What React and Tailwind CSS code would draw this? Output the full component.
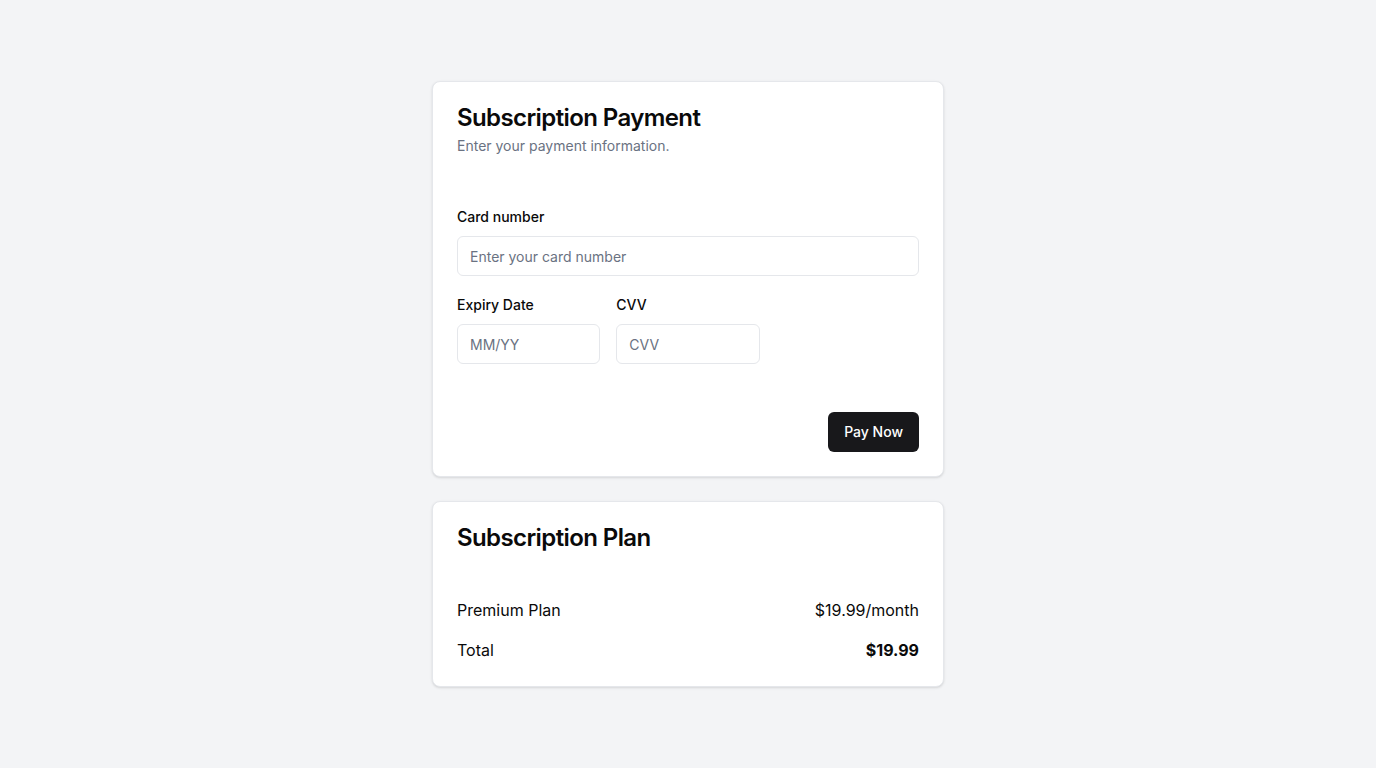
export default function App() {
  return (
    <div className="min-h-screen bg-gray-100 flex items-center justify-center font-['Inter',sans-serif] text-[#0a0a0a]">
      <div className="w-full max-w-lg space-y-6">
        {/* Payment card */}
        <div className="bg-white border border-gray-200 rounded-lg shadow-sm">
          <div className="p-6 flex flex-col space-y-1.5">
            <h2 className="text-2xl font-semibold leading-none tracking-tight">Subscription Payment</h2>
            <p className="text-sm text-gray-500">Enter your payment information.</p>
          </div>
          <div className="px-6 pt-7 pb-6 space-y-5">
            <div>
              <label className="block text-sm font-medium leading-none pt-[2px]">Card number</label>
              <input
                className="mt-[12px] w-full h-10 rounded-md border border-gray-200 px-3 text-sm placeholder:text-gray-500 outline-none"
                placeholder="Enter your card number"
              />
            </div>
            <div className="grid grid-cols-3 gap-4">
              <div>
                <label className="block text-sm font-medium leading-none pt-[2px]">Expiry Date</label>
                <input
                  className="mt-[12px] w-full h-10 rounded-md border border-gray-200 px-3 text-sm placeholder:text-gray-500 outline-none"
                  placeholder="MM/YY"
                />
              </div>
              <div>
                <label className="block text-sm font-medium leading-none pt-[2px]">CVV</label>
                <input
                  className="mt-[12px] w-full h-10 rounded-md border border-gray-200 px-3 text-sm placeholder:text-gray-500 outline-none"
                  placeholder="CVV"
                />
              </div>
            </div>
          </div>
          <div className="p-6 flex justify-end">
            <button className="h-10 px-4 rounded-md bg-[#18181b] text-white text-sm font-medium">Pay Now</button>
          </div>
        </div>

        {/* Plan card */}
        <div className="bg-white border border-gray-200 rounded-lg shadow-sm">
          <div className="p-6">
            <h2 className="text-2xl font-semibold leading-none tracking-tight">Subscription Plan</h2>
          </div>
          <div className="px-6 pt-6 pb-6 space-y-4">
            <div className="flex justify-between leading-6">
              <span>Premium Plan</span>
              <span>$19.99/month</span>
            </div>
            <div className="flex justify-between leading-6">
              <span>Total</span>
              <span className="font-bold">$19.99</span>
            </div>
          </div>
        </div>
      </div>
    </div>
  );
}
